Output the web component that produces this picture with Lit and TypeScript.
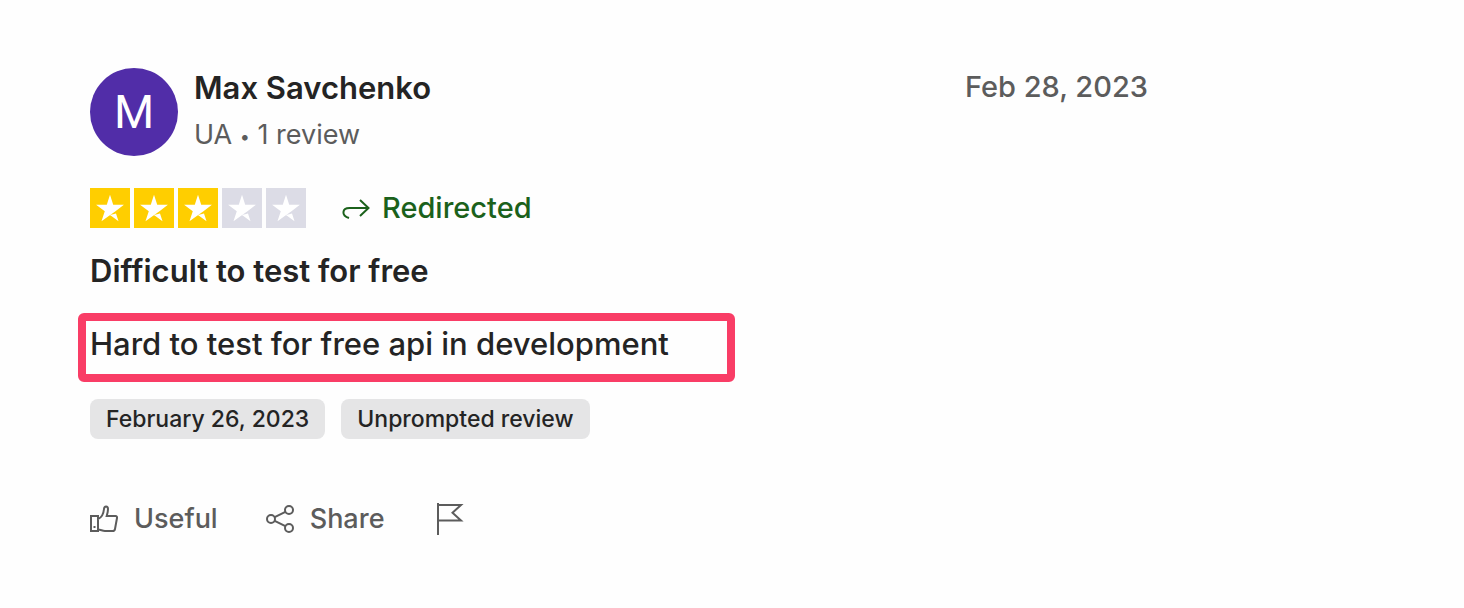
import { LitElement, html, css } from "lit";
import { customElement, property } from "lit/decorators.js";

@customElement("star-rating")
class StarRating extends LitElement {
  @property({ type: Number }) value = 0;

  static styles = css`
    :host { display: block; }
    .stars { display: flex; gap: 4px; }
    .star { width: 40px; height: 40px; display: block; }
    .tile { fill: #dcdce6; }
    .filled .tile { fill: #ffce00; }
    .shape { fill: #ffffff; }
  `;

  render() {
    return html`<div class="stars" role="img" aria-label="Rated ${this.value} out of 5 stars">
      ${[1, 2, 3, 4, 5].map(
        (n) => html`<svg class="star ${n <= this.value ? "filled" : ""}" viewBox="0 0 46 46" aria-hidden="true">
          <path class="tile" d="M0 0h46v46H0z" />
          <path class="shape" d="M23 31l6.900-1.700L32.800 38.200zM39 19.400H26.700L23 7.800l-3.700 11.600H7l10 7.200-3.800 11.600 10-7.200 6.100-4.400z" />
        </svg>`
      )}
    </div>`;
  }
}

@customElement("app-root")
class AppRoot extends LitElement {
  static styles = css`
    :host {
      display: block;
      min-height: 100vh;
      background: #fefefe;
      color: #242424;
      font-family: Inter, "Liberation Sans", sans-serif;
      font-weight: 500;
    }
    .review {
      box-sizing: border-box;
      max-width: 1148px;
      padding: 68px 0 48px 90px;
    }
    .header { display: flex; align-items: flex-start; gap: 16px; }
    .avatar {
      display: flex;
      align-items: center;
      justify-content: center;
      width: 88px;
      height: 88px;
      border-radius: 50%;
      background: #512da8;
      color: #ffffff;
      font-family: Roboto, sans-serif;
      font-size: 46px;
      line-height: 48px;
      font-weight: 400;
    }
    .author { flex: 1; }
    .name { margin: 0; font-size: 31px; line-height: 40px; font-weight: 600; }
    .meta { margin: 8px 0 0; font-size: 27px; line-height: 38px; color: #5c5c5c; font-weight: 400; }
    .dot { font-size: 18px; line-height: 0; vertical-align: middle; }
    .date { font-size: 29px; line-height: 38px; color: #5c5c5c; }
    .rating { display: flex; align-items: center; gap: 36px; margin-top: 32px; }
    .status { display: flex; align-items: center; gap: 12px; font-size: 29px; line-height: 40px; color: #1b611b; }
    .title { margin: 23px 0 0; font-size: 31px; line-height: 40px; font-weight: 600; }
    .highlight {
      box-sizing: border-box;
      max-width: 657px;
      margin: 22px 0 0 -12px;
      padding: 0 4px 7px;
      border: 8px solid #f93d66;
      border-radius: 6px;
    }
    .text { margin: 0; font-size: 31px; line-height: 46px; }
    .tags { display: flex; flex-wrap: wrap; gap: 16px; margin: 17px 0 0; padding: 0; list-style: none; }
    .tag { padding: 0 16px; border-radius: 8px; background: #e5e5e6; font-size: 23px; line-height: 40px; }
    .actions { display: flex; align-items: center; gap: 48px; margin-top: 60px; }
    .action {
      display: flex;
      align-items: center;
      gap: 16px;
      padding: 0;
      border: 0;
      background: none;
      color: #5c5c5c;
      font: inherit;
      font-size: 27px;
      font-weight: 450;
      line-height: 40px;
      cursor: pointer;
    }
    .icon { display: block; flex: none; fill: none; stroke: currentColor; stroke-width: 2; }
  `;

  render() {
    return html`<article class="review">
      <header class="header">
        <div class="avatar" aria-hidden="true">M</div>
        <div class="author">
          <h2 class="name">Max Savchenko</h2>
          <p class="meta">UA <span class="dot">•</span> 1 review</p>
        </div>
        <time class="date" datetime="2023-02-28">Feb 28, 2023</time>
      </header>
      <div class="rating">
        <star-rating value="3"></star-rating>
        <div class="status">
          <svg class="icon" width="28" height="24" viewBox="0 0 28 24" aria-hidden="true">
            <path d="M7 22C-1 19.500 0 12 7.500 12H27M18 4l8.500 8L18 20" />
          </svg>
          <span>Redirected</span>
        </div>
      </div>
      <h3 class="title">Difficult to test for free</h3>
      <div class="highlight">
        <p class="text">Hard to test for free api in development</p>
      </div>
      <ul class="tags">
        <li class="tag">February 26, 2023</li>
        <li class="tag">Unprompted review</li>
      </ul>
      <div class="actions">
        <button class="action" type="button">
          <svg class="icon" width="28" height="28" viewBox="0 0 28 28" aria-hidden="true">
            <path d="M1 11h7v15H1zM8 14c4-1.500 5.500-5 6-10C14.200 0.500 18 0.500 18 4c0 3-.5 4.500-1.300 7H25.500c1.200 0 1.700.8 1.500 2l-2 11c-.2 1.200-1 2-2.300 2H15c-3 0-4-1.500-7-1.500" />
            <path d="M3.500 22h2" />
          </svg>
          <span>Useful</span>
        </button>
        <button class="action" type="button">
          <svg class="icon" width="28" height="28" viewBox="0 0 28 28" aria-hidden="true">
            <circle cx="5" cy="14" r="4" />
            <circle cx="23" cy="5" r="4" />
            <circle cx="23" cy="23" r="4" />
            <path d="M8.700 12.200l10.700-5.400M8.700 15.800l10.700 5.400" />
          </svg>
          <span>Share</span>
        </button>
        <button class="action" type="button" aria-label="Report review">
          <svg class="icon" width="32" height="32" viewBox="0 0 32 32" aria-hidden="true">
            <path d="M5 0v32M5 2h23l-8.500 7.750L28 17.500H5" />
          </svg>
        </button>
      </div>
    </article>`;
  }
}
